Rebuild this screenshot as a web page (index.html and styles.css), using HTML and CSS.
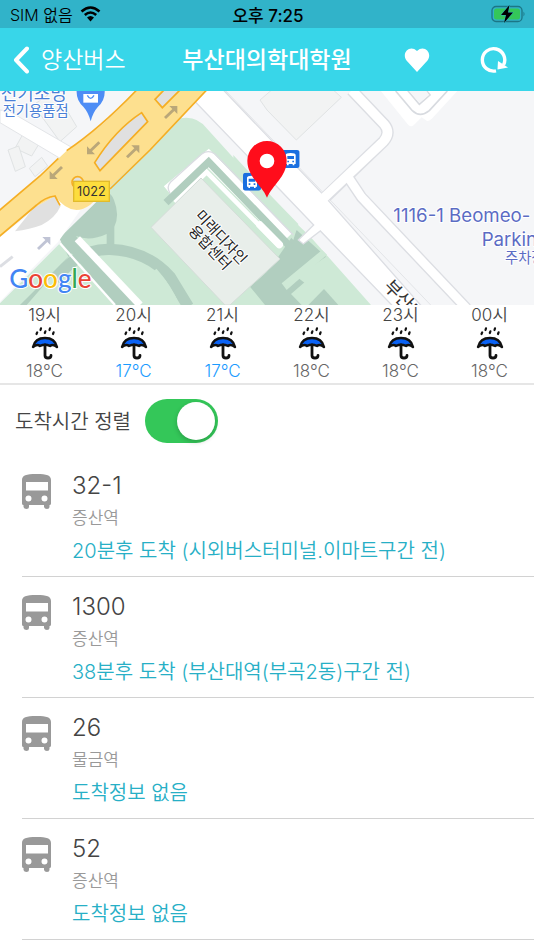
FILE: index.html
```html
<!DOCTYPE html>
<html lang="ko">
<head>
  <meta charset="UTF-8">
  <title>부산대의학대학원</title>
  <meta name="viewport" content="width=device-width, initial-scale=1.0">
  <link rel="stylesheet" href="styles.css">
</head>
<body>

<!-- shared icons -->
<svg class="defs" aria-hidden="true">
  <symbol id="icon-bus" viewBox="0 0 29 35">
    <path fill="#999" fill-rule="evenodd" d="M0 6C0 1.500 4 0 14.500 0S29 1.500 29 6V29.500Q29 31 27.500 31V33Q27.500 35 25 35T22 33V31H7V33Q7 35 4.500 35T1.500 33V31Q0 31 0 29.500ZM4 8V16.500H26V8ZM6.500 21.500A3 3 0 1 0 6.500 27.500A3 3 0 1 0 6.500 21.500ZM22.500 21.500A3 3 0 1 0 22.500 27.500A3 3 0 1 0 22.500 21.500Z"/>
  </symbol>
  <symbol id="icon-rain" viewBox="0 0 28 34">
    <path d="M5.500 8l.7-1.600M9.500 4l.5-1.600M13.800 7l.6-1.600M18.500 4l.5-1.600M22 8l.6-1.600" fill="none" stroke="#111" stroke-width="2.200" stroke-linecap="round"/>
    <path d="M2 21C3.500 14.500 8 12 14 12S24.500 14.500 26 21Q22 17.500 19 20Q14 17.500 9 20Q6 17.500 2 21Z" fill="#0a62f5" stroke="#111" stroke-width="2.400" stroke-linejoin="round"/>
    <path d="M14 19V29.500Q14 32 17 32T20 29.500" fill="none" stroke="#111" stroke-width="2.800" stroke-linecap="round"/>
  </symbol>
  <symbol id="icon-stop" viewBox="0 0 54 54">
    <rect width="54" height="54" rx="8" fill="#1a6fe0"/>
    <path fill="#fff" fill-rule="evenodd" d="M12 15Q12 9 27 9T42 15V42H38V46H33V42H21V46H16V42H12ZM17 18V27H37V18ZM17 32V37H22V32ZM32 32V37H37V32Z"/>
  </symbol>
  <symbol id="arrow" viewBox="-22 -22 44 44">
    <path d="M-20 14L5 -10L-4 -19L20 -19L20 5L11 -4L-14 20Z"/>
  </symbol>
</svg>

<header>
  <div class="status">
    <div class="carrier">
      <span>SIM 없음</span>
      <svg width="21" height="16" viewBox="0 0 21 16">
        <path d="M1.500 5.500Q10.500 -2.500 19.500 5.500M4.800 9Q10.500 4 16.200 9" fill="none" stroke="#000" stroke-width="2.600"/>
        <path d="M7 11.500Q10.500 8.500 14 11.500L10.500 15.500Z"/>
      </svg>
    </div>
    <span class="clock">오후 7:25</span>
    <svg class="battery" width="35" height="18" viewBox="0 0 35 18">
      <rect x="1" y="1.500" width="30" height="15" rx="4" fill="none" stroke="#1c7686" stroke-width="1.300"/>
      <rect x="3" y="3.500" width="26" height="11" rx="2.500" fill="#34c759"/>
      <path d="M32.500 6.500Q34.500 9 32.500 11.500Z" fill="#1c7686"/>
      <path d="M18.500 0L10 10H15L13 18L22 7.500H17Z" stroke="#31b3c9" stroke-width="1" paint-order="stroke"/>
    </svg>
  </div>
  <nav class="navbar">
    <a class="back" href="#">
      <svg width="17" height="28" viewBox="0 0 17 28"><path d="M15 2.500L4 14L15 25.500" fill="none" stroke="#fff" stroke-width="4" stroke-linecap="round" stroke-linejoin="round"/></svg>
      <span>양산버스</span>
    </a>
    <h1>부산대의학대학원</h1>
    <div class="actions">
      <button type="button" aria-label="즐겨찾기">
        <svg width="28" height="28" viewBox="0 0 28 28"><path d="M14 26L3.500 14.500C-2 7 7-2 14 5C21-2 30 7 24.500 14.500Z" fill="#fff"/></svg>
      </button>
      <button type="button" aria-label="새로고침">
        <svg width="28" height="28" viewBox="0 0 28 28"><path d="M16 24.800A11.200 11.200 0 1 1 23.500 19" fill="none" stroke="#fff" stroke-width="3.400"/><path d="M18 15L28 21.500L17.500 23.500Z" fill="#fff"/></svg>
      </button>
    </div>
  </nav>
</header>

<main>
  <svg class="map" viewBox="0 3 1602 642" preserveAspectRatio="xMidYMid slice" role="img" aria-label="지도">
    <rect width="1602" height="645" fill="#f5f6f8"/>

    <!-- buildings -->
    <g fill="#f2f3f3" stroke="#e0e3e4" stroke-width="3">
      <path d="M100 45L165 0L230 110L180 155Z"/>
      <path d="M70 130L118 160L95 198L45 175Z"/>
      <path d="M24 180L56 168L76 230L46 244Z"/>
      <path d="M88 235L125 202L143 228L105 260Z"/>
      <path d="M780 30L815 0L1000 0L1024 22L889 150L801 60Z"/>
    </g>

    <!-- park -->
    <path fill="#cee9d6" d="M400 210L540 85Q590 75 620 115L801 315L931 440L1113 645H0V640L180 460Z"/>
    <path fill="#b1cebf" d="M178 445L290 335Q325 285 342 330Q360 375 343 410V470H320V432Q270 455 228 438L408 645H345L215 490L80 645H60L205 500Z"/>
    <path d="M165 570Q235 475 330 478Q440 482 510 560L565 650" fill="none" stroke="#b1cebf" stroke-width="34"/>
    <path d="M465 540Q510 590 535 650" fill="none" stroke="#cee9d6" stroke-width="12"/>
    <path d="M232 446L420 645" stroke="#fff" stroke-width="22"/>
    <path fill="#b1cebf" d="M750 590L801 545L835 500L890 420L978 500L890 560L1000 645H795Z"/>
    <path fill="#cee9d6" d="M845 580L966 480L981 494L860 600ZM873 612L950 545L1035 645H905Z"/>
    <path fill="#b1cebf" d="M925 645L972 597L1015 645Z"/>

    <!-- main road -->
    <path fill="#fff" stroke="#dcdee3" stroke-width="4" d="M540 -10L590 40L831 290L941 405L895 450L910 462L961 423L1180 650H1266L966 310L670 0Z"/>
    <path fill="#cee9d6" d="M700 195L820 325L895 402L880 450L700 260Z"/>
    <path d="M675 0L1292 645" stroke="#e3e5e8" stroke-width="3"/>
    <path fill="none" stroke="#dcdee3" stroke-width="36" d="M1055 0L1152 102Q1174 128 1150 155L978 320"/>
    <path fill="none" stroke="#dcdee3" stroke-width="34" d="M1050 270L1085 322L1400 655"/>
    <path fill="none" stroke="#fff" stroke-width="28" d="M1055 0L1152 102Q1174 128 1150 155L970 325"/>
    <path fill="none" stroke="#fff" stroke-width="26" d="M1046 264L1085 322L1400 655"/>
    <path fill="#fff" d="M1140 0L1225 105Q1235 115 1247 100L1265 82L1280 92Q1287 95 1297 85L1375 0Z"/>
    <path d="M1187 3L1237 62Q1260 84 1288 62L1342 3M1222 0L1258 43L1290 15L1278 0" fill="none" stroke="#d8dbe0" stroke-width="5"/>
    <path fill="#f5f6f8" d="M1225 0L1258 39L1287 15L1277 0Z"/>

    <!-- design centre -->
    <path d="M505 305L625 205L860 445" fill="none" stroke="#fff" stroke-width="42"/>
    <path d="M510 310Q498 290 512 276L605 192Q625 178 645 192L880 435" fill="none" stroke="#dadce2" stroke-width="4"/>
    <path d="M498 338L626 216L875 475" fill="none" stroke="#b1cebf" stroke-width="22"/>
    <path d="M525 338L620 246L840 470" fill="none" stroke="#fff" stroke-width="14"/>
    <path d="M780 405L838 464" stroke="#fff" stroke-width="22" stroke-linecap="round"/>
    <path d="M453 412L603 264L840 507L690 645H675Z" fill="#e8eeea" stroke="#d4dcd8" stroke-width="3"/>

    <!-- road 1022 -->
    <path fill="#fff" d="M0 440L160 318L245 355L175 455L0 635Z"/>
    <path d="M180 460L345 645" stroke="#fff" stroke-width="7"/>
    <path d="M0 530L38 500" stroke="#dcdee3" stroke-width="9"/>
    <path fill="#fff" stroke="#e3e5e8" stroke-width="3" d="M0 60L30 65L215 172L180 205L0 98Z"/>
    <path fill="#e0e0e0" d="M165 318L182 348Q165 385 125 405Q90 418 45 424L100 355Z"/>
    <path fill="#fde08f" d="M0 360L120 258L200 182Q315 110 410 0H620L450 180L270 345Q215 385 165 318L100 355L0 438Z"/>
    <path fill="none" stroke="#f5ae24" stroke-width="5" d="M-4 363L120 258L175 205M200 182Q300 115 410 0M620 0L450 180L330 297M-4 441L110 345Q135 322 165 318L180 346"/>
    <g fill="#e0e0e0" stroke="#f5ae24" stroke-width="5">
      <path d="M425 68L443 95L300 242L284 218Q345 120 425 68Z"/>
      <path d="M492 0L465 28L487 53L540 0Z"/>
      <circle cx="233" cy="277" r="17"/>
    </g>
    <g fill="#baa779">
      <use href="#arrow" x="490" y="45" width="44" height="44"/>
      <use href="#arrow" x="376" y="163" width="44" height="44"/>
      <use href="#arrow" x="-22" y="-22" width="44" height="44" transform="translate(281 174) rotate(180)"/>
      <use href="#arrow" x="-22" y="-22" width="44" height="44" transform="translate(169 248) rotate(180)"/>
    </g>
    <use href="#arrow" x="109" y="438" width="44" height="44" fill="#c0c4d5"/>
    <rect x="221" y="274" width="107" height="60" fill="#fddd3d" stroke="#e2bb2b" stroke-width="4"/>
    <text class="road-no" x="274" y="318" text-anchor="middle">1022</text>

    <!-- places -->
    <path d="M230 0H314Q316 30 294 50Q278 68 272 94Q266 68 250 50Q228 30 230 0Z" fill="#4e8df5"/>
    <path d="M250 12H294V38H250Z" fill="#fff"/>
    <path d="M262 16Q272 34 282 16" fill="none" stroke="#4e8df5" stroke-width="4"/>
    <g class="shop">
      <text x="2" y="29">전기조명</text>
      <text class="small" x="8" y="79">전기용품점</text>
    </g>
    <g class="place" text-anchor="middle" transform="translate(648 456) rotate(47)">
      <text x="0" y="-6">미래디자인</text>
      <text x="0" y="40">융합센터</text>
    </g>
    <text class="street" transform="translate(1148 592) rotate(46)">부산대</text>
    <g class="parking">
      <text x="1180" y="396">1116-1 Beomeo-</text>
      <text x="1445" y="467">Parking</text>
      <text class="small" x="1515" y="520">주차장</text>
    </g>
    <use href="#icon-stop" x="729" y="248" width="54" height="54"/>
    <use href="#icon-stop" x="845" y="180" width="54" height="54"/>
    <path fill="#ff0d1b" fill-rule="evenodd" d="M801 323C785 285 742 260 742 212A59 59 0 0 1 860 212C860 260 817 285 801 323ZM801 191A22 22 0 1 0 801 235A22 22 0 1 0 801 191Z"/>
    <text class="logo" x="28" y="595"><tspan fill="#4285f4">G</tspan><tspan fill="#ea4335">o</tspan><tspan fill="#fbbc05">o</tspan><tspan fill="#4285f4">g</tspan><tspan fill="#34a853">l</tspan><tspan fill="#ea4335">e</tspan></text>
  </svg>

  <section class="weather">
    <div class="hour"><span>19시</span><svg><use href="#icon-rain"/></svg><span class="temp">18°C</span></div>
    <div class="hour"><span>20시</span><svg><use href="#icon-rain"/></svg><span class="temp low">17°C</span></div>
    <div class="hour"><span>21시</span><svg><use href="#icon-rain"/></svg><span class="temp low">17°C</span></div>
    <div class="hour"><span>22시</span><svg><use href="#icon-rain"/></svg><span class="temp">18°C</span></div>
    <div class="hour"><span>23시</span><svg><use href="#icon-rain"/></svg><span class="temp">18°C</span></div>
    <div class="hour"><span>00시</span><svg><use href="#icon-rain"/></svg><span class="temp">18°C</span></div>
  </section>

  <div class="sort">
    <label for="sortByTime">도착시간 정렬</label>
    <input class="switch" type="checkbox" id="sortByTime" checked>
  </div>

  <ul class="buses">
    <li>
      <svg><use href="#icon-bus"/></svg>
      <div>
        <h2>32-1</h2>
        <p class="stop">증산역</p>
        <p class="arrival">20분후 도착 (시외버스터미널.이마트구간 전)</p>
      </div>
    </li>
    <li>
      <svg><use href="#icon-bus"/></svg>
      <div>
        <h2>1300</h2>
        <p class="stop">증산역</p>
        <p class="arrival">38분후 도착 (부산대역(부곡2동)구간 전)</p>
      </div>
    </li>
    <li>
      <svg><use href="#icon-bus"/></svg>
      <div>
        <h2>26</h2>
        <p class="stop">물금역</p>
        <p class="arrival">도착정보 없음</p>
      </div>
    </li>
    <li>
      <svg><use href="#icon-bus"/></svg>
      <div>
        <h2>52</h2>
        <p class="stop">증산역</p>
        <p class="arrival">도착정보 없음</p>
      </div>
    </li>
  </ul>
</main>

</body>
</html>
```
FILE: styles.css
```css
* { box-sizing: border-box; }
body {
  margin: 0;
  font-family: Inter, "Noto Sans CJK KR", sans-serif;
  font-weight: 350;
  background: #fff;
  color: #444;
}
h1, h2, p, ul { margin: 0; padding: 0; }
.defs { position: absolute; width: 0; height: 0; }

.status {
  display: grid;
  grid-template-columns: 1fr auto 1fr;
  align-items: center;
  height: 28px;
  padding: 0 8px 0 10px;
  background: #31b3c9;
  color: #000;
  font-size: 16px;
}
.carrier { display: flex; align-items: center; gap: 7px; }
.clock { font-size: 17px; font-weight: 500; }
.battery { justify-self: end; }

.navbar {
  display: grid;
  grid-template-columns: 1fr auto 1fr;
  align-items: center;
  height: 63px;
  padding: 0 12px;
  background: #38d6e9;
  color: #fff;
}
.navbar h1 { font-size: 23px; font-weight: 500; line-height: 32px; }
.back {
  display: flex;
  align-items: center;
  gap: 12px;
  color: #fff;
  font-size: 23px;
  line-height: 32px;
  text-decoration: none;
}
.actions { display: flex; justify-content: flex-end; gap: 49px; padding-right: 14px; }
.actions button {
  display: flex;
  padding: 0;
  border: 0;
  background: none;
  cursor: pointer;
}

.map { display: block; width: 100%; height: 214px; }
.map text { font-weight: 400; paint-order: stroke; stroke: #fff; stroke-width: 6px; stroke-linejoin: round; }
.map .road-no { font-size: 38px; fill: #333; stroke: none; }
.map .shop text { font-size: 54px; fill: #4a7fd6; }
.map .place text { font-size: 44px; fill: #222; }
.map .street { font-size: 54px; fill: #333; }
.map .parking text { font-size: 56px; fill: #5b6cc4; }
.map .shop .small, .map .parking .small { font-size: 43px; }
.map .logo { font-family: Lato, sans-serif; font-size: 78px; font-weight: 500; }

.weather {
  display: grid;
  grid-template-columns: repeat(6, 1fr);
  padding-bottom: 2px;
  border-bottom: 2px solid #e6e6e6;
}
.hour {
  display: flex;
  flex-direction: column;
  align-items: center;
  font-size: 17px;
  line-height: 20px;
}
.hour svg { width: 28px; height: 34px; margin: 1px 0; }
.temp { color: #666; }
.low { color: #1a9bff; }

.sort {
  display: flex;
  align-items: center;
  gap: 14px;
  height: 71px;
  padding: 0 15px;
  font-size: 20px;
}
.switch {
  appearance: none;
  width: 73px;
  height: 44px;
  margin: 0;
  padding: 3px;
  border-radius: 22px;
  background: #ccc;
  cursor: pointer;
}
.switch::before {
  content: "";
  display: block;
  width: 38px;
  height: 38px;
  border-radius: 50%;
  background: #fff;
  box-shadow: 0 2px 5px rgba(0, 0, 0, 0.2);
}
.switch:checked { background: #34c759; }
.switch:checked::before { margin-left: auto; }

.buses { list-style: none; }
.buses li {
  display: flex;
  gap: 21px;
  margin-left: 22px;
  padding: 13px 0 8px;
  border-bottom: 1px solid #d2d2d2;
}
.buses svg { width: 29px; height: 35px; margin-top: 5px; flex: none; }
.buses h2 { font-size: 24px; font-weight: 350; line-height: 34px; }
.stop { font-size: 17px; line-height: 31px; color: #999; }
.arrival { font-size: 20px; line-height: 34px; color: #27afc6; }
```
